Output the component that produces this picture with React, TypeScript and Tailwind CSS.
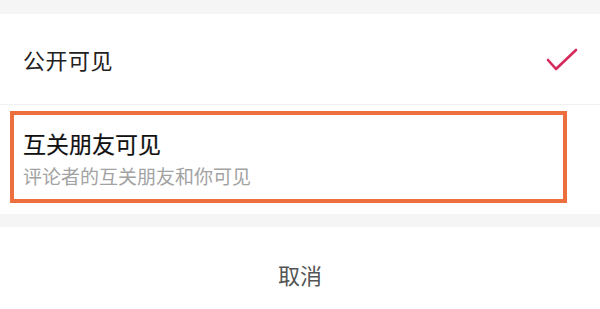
export default function App() {
  return (
    <div className="w-[600px] h-[309px] bg-[#f5f5f5] flex flex-col overflow-hidden" style={{ fontFamily: '"Noto Sans CJK SC", "Noto Sans", sans-serif' }}>
      <div className="h-[14px] shrink-0" />

      {/* 公开 */}
      <div className="h-[91px] shrink-0 bg-white flex items-center justify-between pl-[23px] pr-[20px] border-b border-[#f0f0f0]">
        <span className="text-[22px] tracking-[0.5px] text-[#222]">公开可见</span>
        <svg width="34" height="26" viewBox="0 0 34 26" fill="none" className="mr-[1px] mt-[2px]">
          <path d="M3 13 L11 22 L31 3" stroke="#d42a5b" strokeWidth="2.6" strokeLinecap="round" strokeLinejoin="round" />
        </svg>
      </div>

      {/* 互关朋友 */}
      <div className="h-[109px] shrink-0 bg-white pt-[6px] pb-[11px] pl-[10px] pr-[33px] flex">
        <div className="flex-1 border-[4px] border-[#ec6f3d] flex flex-col justify-center pl-[9px] gap-[8px] pt-[2px]">
          <span className="text-[23px] leading-[28px] text-[#111] [-webkit-text-stroke:0.2px_#111]">互关朋友可见</span>
          <span className="text-[19px] leading-[22px] text-[#a3a3a3]">评论者的互关朋友和你可见</span>
        </div>
      </div>

      <div className="h-[13px] shrink-0" />

      {/* 取消 */}
      <div className="flex-1 bg-white flex items-center justify-center pt-[12px]">
        <span className="text-[22px] text-[#555]">取消</span>
      </div>
    </div>
  )
}
